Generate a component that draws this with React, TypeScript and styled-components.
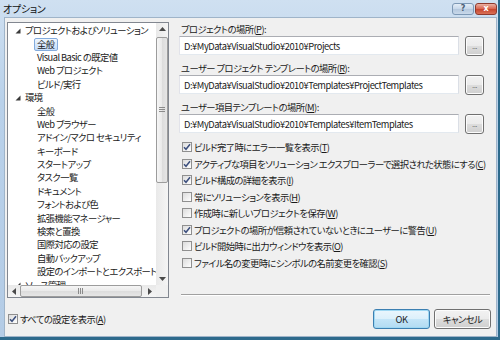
import { ReactNode } from 'react';
import styled, { createGlobalStyle } from 'styled-components';

const GlobalStyle = createGlobalStyle`
  html, body {
    margin: 0;
    padding: 0;
  }
  body {
    width: 500px;
    height: 340px;
    overflow: hidden;
    font-family: 'Noto Sans CJK JP', 'Noto Sans', sans-serif;
    font-size: 9.3px;
    letter-spacing: -0.55px;
    font-feature-settings: 'palt';
    color: #1a1a1a;
  }
  * {
    box-sizing: border-box;
  }
`;

const Frame = styled.div`
  width: 500px;
  height: 340px;
  display: flex;
  flex-direction: column;
  background: linear-gradient(#cfe0f1, #b9d1ea 30%, #b4cce6);
  border-right: 2px solid #2d6a8c;
  border-bottom: 3px solid #2d6a8c;
  overflow: hidden;
`;

const TitleBar = styled.div`
  height: 17px;
  flex: none;
  display: flex;
  align-items: center;
  padding-left: 3px;
`;

const Title = styled.div`
  flex: 1;
  font-size: 10px;
  letter-spacing: -0.3px;
  color: #111;
`;

const CaptionButton = styled.div<{ $close?: boolean }>`
  width: 22px;
  height: 12px;
  flex: none;
  margin-right: 1px;
  border: 1px solid ${(p) => (p.$close ? '#8e3a2e' : '#7d98b5')};
  border-radius: 3px;
  background: ${(p) =>
    p.$close
      ? 'linear-gradient(#eab1a4, #d9634d 50%, #c6442d 51%, #d97158)'
      : 'linear-gradient(#e3edf7, #c6d7ea 50%, #b4c8de 51%, #c9d9ea)'};
  display: flex;
  align-items: center;
  justify-content: center;
  font-family: 'DejaVu Sans', sans-serif;
  font-size: 8px;
  font-weight: bold;
  letter-spacing: 0;
  color: ${(p) => (p.$close ? '#fff' : '#4b5d73')};
`;

const Body = styled.div`
  flex: 1;
  min-height: 0;
  margin: 0 1px 0 4px;
  background: #f0f0f0;
  border: 1px solid #9fb4c9;
  display: flex;
  gap: 10px;
  padding: 4px 5px 7px 2px;
`;

const LeftColumn = styled.div`
  width: 162px;
  flex: none;
  display: flex;
  flex-direction: column;
`;

const TreePanel = styled.div`
  height: 276px;
  border: 1px solid #828790;
  background: #fff;
  display: grid;
  grid-template-columns: minmax(0, 1fr) 12px;
  grid-template-rows: minmax(0, 1fr) 12px;
`;

const TreeViewport = styled.div`
  overflow: hidden;
  padding-top: 1px;
`;

const TreeRow = styled.div<{ $level: number }>`
  height: 13.4px;
  display: flex;
  align-items: center;
  padding-left: ${(p) => (p.$level === 0 ? 7 : 26)}px;
  white-space: nowrap;
`;

const Expander = styled.svg`
  width: 6px;
  height: 6px;
  margin-right: 1px;
  flex: none;
`;

const TreeLabel = styled.span<{ $selected?: boolean }>`
  line-height: 11px;
  padding: 0 2px;
  border: 1px solid ${(p) => (p.$selected ? '#84acdd' : 'transparent')};
  border-radius: 2px;
  background: ${(p) =>
    p.$selected ? 'linear-gradient(#f2f8fe, #dcebfc 40%, #c6defb)' : 'transparent'};
`;

const ScrollTrack = styled.div<{ $vertical?: boolean }>`
  display: flex;
  min-height: 0;
  flex-direction: ${(p) => (p.$vertical ? 'column' : 'row')};
  background: ${(p) =>
    p.$vertical
      ? 'linear-gradient(90deg, #e9e9e9, #f5f5f5)'
      : 'linear-gradient(#e9e9e9, #f5f5f5)'};
`;

const ScrollArrow = styled.div`
  width: 12px;
  height: 12px;
  flex: none;
  display: flex;
  align-items: center;
  justify-content: center;
`;

const ScrollGutter = styled.div<{ $vertical?: boolean }>`
  flex: 1;
  min-height: 0;
  display: flex;
  flex-direction: ${(p) => (p.$vertical ? 'column' : 'row')};
  padding: ${(p) => (p.$vertical ? '2px 0 0 0' : '0 1px 0 0')};
`;

const ScrollThumb = styled.div<{ $vertical?: boolean; $length: number }>`
  ${(p) => (p.$vertical ? 'height' : 'width')}: ${(p) => p.$length}px;
  ${(p) => (p.$vertical ? 'width' : 'height')}: 100%;
  flex: none;
  border: 1px solid #9c9c9c;
  border-radius: 2px;
  background: ${(p) =>
    p.$vertical
      ? 'linear-gradient(90deg, #f6f6f6, #e9e9e9 50%, #dcdcdc 51%, #e6e6e6)'
      : 'linear-gradient(#f6f6f6, #e9e9e9 50%, #dcdcdc 51%, #e6e6e6)'};
  display: flex;
  align-items: center;
  justify-content: center;
`;

const ScrollCorner = styled.div`
  background: #f0f0f0;
`;

const CheckRow = styled.label<{ $inset: number }>`
  display: flex;
  align-items: center;
  height: 16.5px;
  padding-left: ${(p) => p.$inset}px;
  white-space: nowrap;
`;

const ShowAllRow = styled(CheckRow)`
  margin-top: 14px;
  height: 13px;
`;

const Box = styled.span`
  width: 10px;
  height: 10px;
  flex: none;
  margin-right: 2px;
  border: 1px solid #8f8f8f;
  background: linear-gradient(135deg, #dcdcdc, #f4f4f4 70%, #fff);
  display: flex;
  align-items: center;
  justify-content: center;
`;

const RightColumn = styled.div`
  flex: 1;
  min-width: 0;
  display: flex;
  flex-direction: column;
`;

const Field = styled.div`
  margin-bottom: 5px;
  padding-right: 7px;
`;

const FieldLabel = styled.div`
  height: 13px;
  line-height: 13px;
  padding-left: 2px;
  margin-top: 1px;
  white-space: nowrap;
`;

const FieldRow = styled.div`
  display: flex;
  gap: 6px;
  align-items: flex-start;
`;

const TextBox = styled.div`
  flex: 1;
  min-width: 0;
  height: 19px;
  border: 1px solid #abadb3;
  border-color: #abadb3 #dbdfe6 #e3e9ef #e2e3ea;
  background: #fff;
  padding-left: 4px;
  display: flex;
  align-items: center;
  white-space: nowrap;
  overflow: hidden;
  letter-spacing: -0.45px;
`;

const PushButton = styled.button<{ $default?: boolean; $width: number }>`
  width: ${(p) => p.$width}px;
  height: 20px;
  flex: none;
  padding: 0;
  font: inherit;
  letter-spacing: inherit;
  font-feature-settings: inherit;
  color: #1a1a1a;
  border: 1px solid ${(p) => (p.$default ? '#3c7fb1' : '#707070')};
  border-radius: 3px;
  background: ${(p) =>
    p.$default
      ? 'linear-gradient(#eaf6fd, #dcf0fb 50%, #c4e5f8 51%, #b2dbf2)'
      : 'linear-gradient(#f2f2f2, #ebebeb 50%, #dddddd 51%, #cfcfcf)'};
  box-shadow: inset 0 0 0 1px ${(p) => (p.$default ? '#9fd8f3' : '#fcfcfc')};
  display: flex;
  align-items: center;
  justify-content: center;
`;

const Ellipsis = styled.span`
  font-family: 'DejaVu Sans', sans-serif;
  font-size: 7px;
  letter-spacing: -0.5px;
  margin-top: 2px;
  color: #555;
`;

const CheckList = styled.div`
  white-space: nowrap;
`;

const Spacer = styled.div`
  flex: 1;
`;

const Separator = styled.div`
  margin: 0 1px 0 2px;
  border-top: 1px solid #a0a0a0;
  border-bottom: 1px solid #fff;
`;

const ButtonBar = styled.div`
  margin-top: 13px;
  display: flex;
  justify-content: flex-end;
  gap: 4px;
`;

const Tri = ({ dir }: { dir: 'up' | 'down' | 'left' | 'right' }) => {
  const pts = {
    up: '0,4 3.5,0 7,4',
    down: '0,0 7,0 3.5,4',
    left: '4,0 4,7 0,3.5',
    right: '0,0 0,7 4,3.5',
  }[dir];
  const vertical = dir === 'up' || dir === 'down';
  return (
    <svg width={vertical ? 7 : 4} height={vertical ? 4 : 7}>
      <polygon points={pts} fill="#4a4a4a" />
    </svg>
  );
};

const Grip = ({ vertical }: { vertical?: boolean }) => (
  <svg width="6" height="6">
    {[0, 2, 4].map((o) =>
      vertical ? (
        <line key={o} x1="0" x2="6" y1={o + 0.5} y2={o + 0.5} stroke="#8a8a8a" />
      ) : (
        <line key={o} y1="0" y2="6" x1={o + 0.5} x2={o + 0.5} stroke="#8a8a8a" />
      )
    )}
  </svg>
);

const CheckMark = () => (
  <svg width="8" height="8" viewBox="0 0 8 8">
    <path d="M1 4.2 L3 6.3 L7 1.2" fill="none" stroke="#3c4f7d" strokeWidth="1.5" />
  </svg>
);

const Check = ({ checked, inset, children }: { checked?: boolean; inset: number; children: ReactNode }) => (
  <CheckRow $inset={inset}>
    <Box>{checked && <CheckMark />}</Box>
    <span>{children}</span>
  </CheckRow>
);

const treeItems: { level: number; label: string; selected?: boolean }[] = [
  { level: 0, label: 'プロジェクトおよびソリューション' },
  { level: 1, label: '全般', selected: true },
  { level: 1, label: 'Visual Basic の既定値' },
  { level: 1, label: 'Web プロジェクト' },
  { level: 1, label: 'ビルド/実行' },
  { level: 0, label: '環境' },
  { level: 1, label: '全般' },
  { level: 1, label: 'Web ブラウザー' },
  { level: 1, label: 'アドイン/マクロ セキュリティ' },
  { level: 1, label: 'キーボード' },
  { level: 1, label: 'スタートアップ' },
  { level: 1, label: 'タスク一覧' },
  { level: 1, label: 'ドキュメント' },
  { level: 1, label: 'フォントおよび色' },
  { level: 1, label: '拡張機能マネージャー' },
  { level: 1, label: '検索と置換' },
  { level: 1, label: '国際対応の設定' },
  { level: 1, label: '自動バックアップ' },
  { level: 1, label: '設定のインポートとエクスポート' },
  { level: 0, label: 'ソース管理' },
];

const fields = [
  { label: 'プロジェクトの場所', key: 'P', value: 'D:¥MyData¥VisualStudio¥2010¥Projects' },
  {
    label: 'ユーザー プロジェクト テンプレートの場所',
    key: 'R',
    value: 'D:¥MyData¥VisualStudio¥2010¥Templates¥ProjectTemplates',
  },
  {
    label: 'ユーザー項目テンプレートの場所',
    key: 'M',
    value: 'D:¥MyData¥VisualStudio¥2010¥Templates¥ItemTemplates',
  },
];

const options = [
  { label: 'ビルド完了時にエラー一覧を表示', key: 'T', checked: true },
  { label: 'アクティブな項目をソリューション エクスプローラーで選択された状態にする', key: 'C', checked: true },
  { label: 'ビルド構成の詳細を表示', key: 'I', checked: true },
  { label: '常にソリューションを表示', key: 'H', checked: false },
  { label: '作成時に新しいプロジェクトを保存', key: 'W', checked: false },
  { label: 'プロジェクトの場所が信頼されていないときにユーザーに警告', key: 'U', checked: true },
  { label: 'ビルド開始時に出力ウィンドウを表示', key: 'O', checked: false },
  { label: 'ファイル名の変更時にシンボルの名前変更を確認', key: 'S', checked: false },
];

const App = () => {
  return (
    <>
      <GlobalStyle />
      <Frame>
        <TitleBar>
          <Title>オプション</Title>
          <CaptionButton>?</CaptionButton>
          <CaptionButton $close>x</CaptionButton>
        </TitleBar>
        <Body>
          <LeftColumn>
            <TreePanel>
              <TreeViewport>
                {treeItems.map((item, i) => (
                  <TreeRow key={i} $level={item.level}>
                    {item.level === 0 && (
                      <Expander viewBox="0 0 6 6">
                        <polygon points="5.5,0.5 5.5,5.5 0.5,5.5" fill="#3a3a3a" />
                      </Expander>
                    )}
                    <TreeLabel $selected={item.selected}>{item.label}</TreeLabel>
                  </TreeRow>
                ))}
              </TreeViewport>
              <ScrollTrack $vertical>
                <ScrollArrow>
                  <Tri dir="up" />
                </ScrollArrow>
                <ScrollGutter $vertical>
                  <ScrollThumb $vertical $length={146}>
                    <Grip vertical />
                  </ScrollThumb>
                </ScrollGutter>
                <ScrollArrow>
                  <Tri dir="down" />
                </ScrollArrow>
              </ScrollTrack>
              <ScrollTrack>
                <ScrollArrow>
                  <Tri dir="left" />
                </ScrollArrow>
                <ScrollGutter>
                  <ScrollThumb $length={122}>
                    <Grip />
                  </ScrollThumb>
                </ScrollGutter>
                <ScrollArrow>
                  <Tri dir="right" />
                </ScrollArrow>
              </ScrollTrack>
              <ScrollCorner />
            </TreePanel>
            <ShowAllRow $inset={1}>
              <Box>
                <CheckMark />
              </Box>
              <span>
                すべての設定を表示(<u>A</u>)
              </span>
            </ShowAllRow>
          </LeftColumn>

          <RightColumn>
            {fields.map((f) => (
              <Field key={f.key}>
                <FieldLabel>
                  {f.label}(<u>{f.key}</u>):
                </FieldLabel>
                <FieldRow>
                  <TextBox>{f.value}</TextBox>
                  <PushButton $width={19}>
                    <Ellipsis>...</Ellipsis>
                  </PushButton>
                </FieldRow>
              </Field>
            ))}
            <CheckList>
              {options.map((o) => (
                <Check key={o.key} checked={o.checked} inset={3}>
                  {o.label}(<u>{o.key}</u>)
                </Check>
              ))}
            </CheckList>
            <Spacer />
            <Separator />
            <ButtonBar>
              <PushButton $default $width={57}>
                OK
              </PushButton>
              <PushButton $width={57}>キャンセル</PushButton>
            </ButtonBar>
          </RightColumn>
        </Body>
      </Frame>
    </>
  );
};

export default App;
